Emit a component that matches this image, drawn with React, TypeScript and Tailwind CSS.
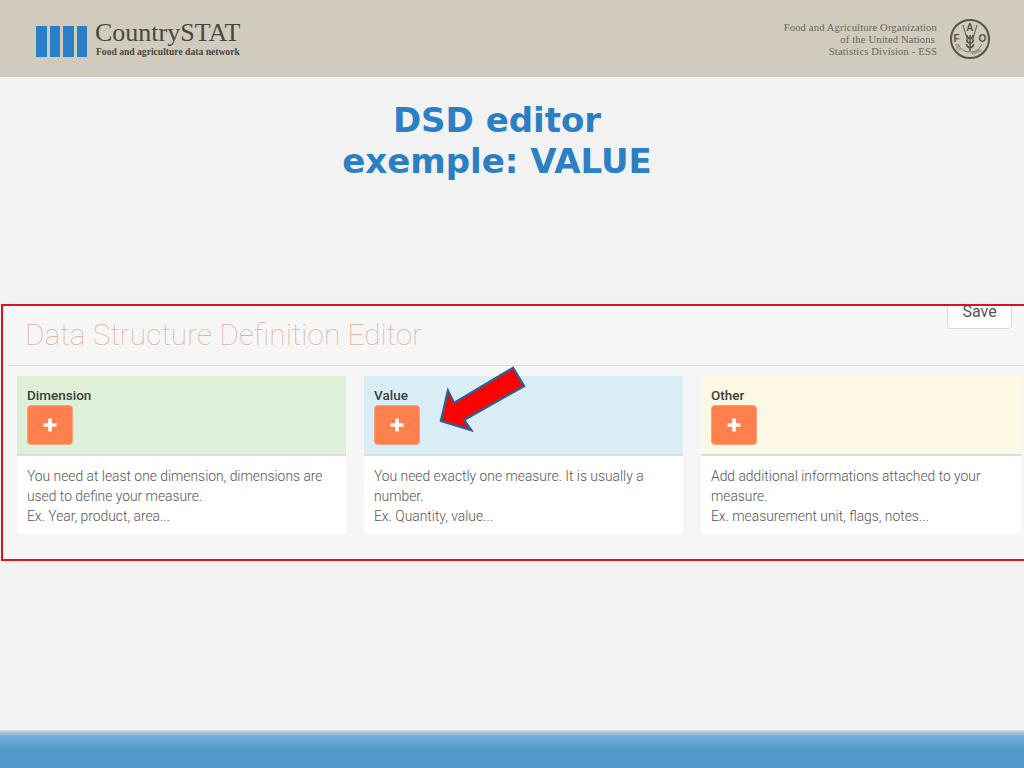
const cards = [
  {
    title: "Dimension",
    bg: "bg-[#dff0d8]",
    width: "w-[329px]",
    lines: ["You need at least one dimension, dimensions are", "used to define your measure.", "Ex. Year, product, area..."],
  },
  {
    title: "Value",
    bg: "bg-[#d9edf7]",
    width: "w-[319px]",
    lines: ["You need exactly one measure. It is usually a", "number.", "Ex. Quantity, value..."],
  },
  {
    title: "Other",
    bg: "bg-[#fcf8e3]",
    width: "w-[320px]",
    lines: ["Add additional informations attached to your", "measure.", "Ex. measurement unit, flags, notes..."],
  },
];

const FaoLogo = () => (
  <svg width="42" height="42" viewBox="0 0 42 42" className="shrink-0">
    <defs>
      <path id="fiat" d="M5.5 27A16.5 16.5 0 0 0 19 37" />
      <path id="panis" d="M23 37A16.5 16.5 0 0 0 36.5 27" />
    </defs>
    <circle cx="21" cy="21" r="19" fill="none" stroke="#55564a" strokeWidth="2" />
    <path d="M9 26A13 13 0 0 0 33 26" fill="none" stroke="#66665a" strokeWidth="0.8" />
    <text x="4.5" y="24" fontSize="10" fontWeight="700" fontFamily="Liberation Sans, sans-serif" fill="#55564a">F</text>
    <text x="17.2" y="13" fontSize="10" fontWeight="700" fontFamily="Liberation Sans, sans-serif" fill="#55564a">A</text>
    <text x="29.5" y="24" fontSize="10" fontWeight="700" fontFamily="Liberation Sans, sans-serif" fill="#55564a">O</text>
    <text fontSize="3.8" fontFamily="Liberation Sans, sans-serif" fill="#55564a">
      <textPath href="#fiat">FIAT</textPath>
    </text>
    <text fontSize="3.8" fontFamily="Liberation Sans, sans-serif" fill="#55564a">
      <textPath href="#panis">PANIS</textPath>
    </text>
    <path d="M21 17v16M21 21c-2.5-1-3-3-3-4M21 21c2.500-1 3-3 3-4M21 25.500c-3-1-3.500-3-3.500-4M21 25.500c3-1 3.500-3 3.500-4M21 30c-3-1-3.500-3-3.500-4M21 30c3-1 3.500-3 3.500-4" fill="none" stroke="#55564a" strokeWidth="1.6" />
    <path d="M14 7l4.500 15M28 7l-4.500 15" fill="none" stroke="#55564a" strokeWidth="1" />
  </svg>
);

const Card = ({ card }: { card: (typeof cards)[number] }) => (
  <div className={`${card.width} shrink-0 bg-white rounded-b-[3px] h-[158px]`}>
    <div className={`${card.bg} h-[80px] border-b-2 border-[#dcdcdc] pl-[10px] pt-[10px]`}>
      <div className="text-[13.5px] leading-[19px] font-medium text-[#3a3f3a] font-['Roboto',sans-serif]">{card.title}</div>
      <div className="w-[46px] h-[40px] rounded-[4px] bg-[#ff7f4d] border border-[#f2a27f] flex items-center justify-center">
        <svg width="16" height="16" viewBox="0 0 16 16">
          <path d="M8 1.500v13M1.500 8h13" stroke="#fff" strokeWidth="3.6" />
        </svg>
      </div>
    </div>
    <div className="pl-[10px] pt-[10px] text-[13.85px] leading-[20px] font-light text-[#555] font-['Roboto',sans-serif] whitespace-nowrap">
      {card.lines.map((l) => (
        <div key={l}>{l}</div>
      ))}
    </div>
  </div>
);

export default function App() {
  return (
    <div className="relative w-[1024px] h-[768px] overflow-hidden bg-[#f2f2f2] flex flex-col">
      <header className="h-[77px] shrink-0 bg-[#d0cbbd] flex items-center justify-between pl-[36px] pr-[33px]">
        <div className="self-start mt-[20px] flex items-start gap-[8px]">
          <div className="flex gap-[3px] mt-[6px]">
            <div className="w-[10.5px] h-[31px] bg-[#2a80c8]" />
            <div className="w-[10.5px] h-[31px] bg-[#2a80c8]" />
            <div className="w-[10.5px] h-[31px] bg-[#2a80c8]" />
            <div className="w-[10.5px] h-[31px] bg-[#2a80c8]" />
          </div>
          <div className="font-['Liberation_Serif',serif] text-[#47473c]">
            <div className="text-[26px] leading-[26px]">CountrySTAT</div>
            <div className="pl-[1px] text-[9.6px] leading-[12px] font-bold">Food and agriculture data network</div>
          </div>
        </div>
        <div className="flex items-center gap-[12px]">
          <div className="pt-[2px] text-right font-['Liberation_Serif',serif] text-[10.6px] leading-[12px] text-[#66665a] tracking-[0.15px]">
            <div>Food and Agriculture Organization</div>
            <div className="pr-[2px]">of the United Nations</div>
            <div>Statistics Division - ESS</div>
          </div>
          <FaoLogo />
        </div>
      </header>

      <main className="flex-1 flex flex-col">
        <h1 className="mt-[23px] ml-[-30px] text-center text-[34px] leading-[41px] font-bold text-[#2a7fc5] font-['DejaVu_Sans',sans-serif]">
          DSD editor
          <br />
          exemple: VALUE
        </h1>

        <section className="mt-[122px] ml-[1px] w-[1040px] h-[257px] border-2 border-[#e01020] bg-[#f6f6f6] overflow-hidden">
          <div className="relative h-[60px] border-b border-[#dddddd] ml-[5px]">
            <div className="pl-[17px] pt-[10px] text-[29.9px] leading-[38px] font-thin text-[#e2b49c] font-['Roboto',sans-serif] whitespace-nowrap">
              Data Structure Definition Editor
            </div>
            <div className="absolute left-[939px] top-[-9px] w-[65px] h-[32px] bg-white border border-[#d8d8d8] rounded-[4px] flex items-end justify-center pb-[10px] text-[16px] leading-[12px] text-[#555] font-['Roboto',sans-serif]">
              Save
            </div>
          </div>
          <div className="flex gap-[18px] pl-[14px] pt-[10px]">
            {cards.map((c) => (
              <Card key={c.title} card={c} />
            ))}
          </div>
        </section>
      </main>

      <footer className="h-[38px] shrink-0 bg-gradient-to-b from-[#d8d8d8] via-[#72b2dd] via-[15%] to-[#4f9acb] to-50%" />

      {/* arrow callout over the Value card */}
      <svg className="absolute left-[435px] top-[360px]" width="95" height="75" viewBox="435 360 95 75">
        <polygon
          points="441,421 448,391 454,403 513,368 524,386 464,420 471,430"
          fill="#ff0000"
          stroke="#3b5a8c"
          strokeWidth="2.5"
          strokeLinejoin="miter"
        />
      </svg>
    </div>
  );
}
